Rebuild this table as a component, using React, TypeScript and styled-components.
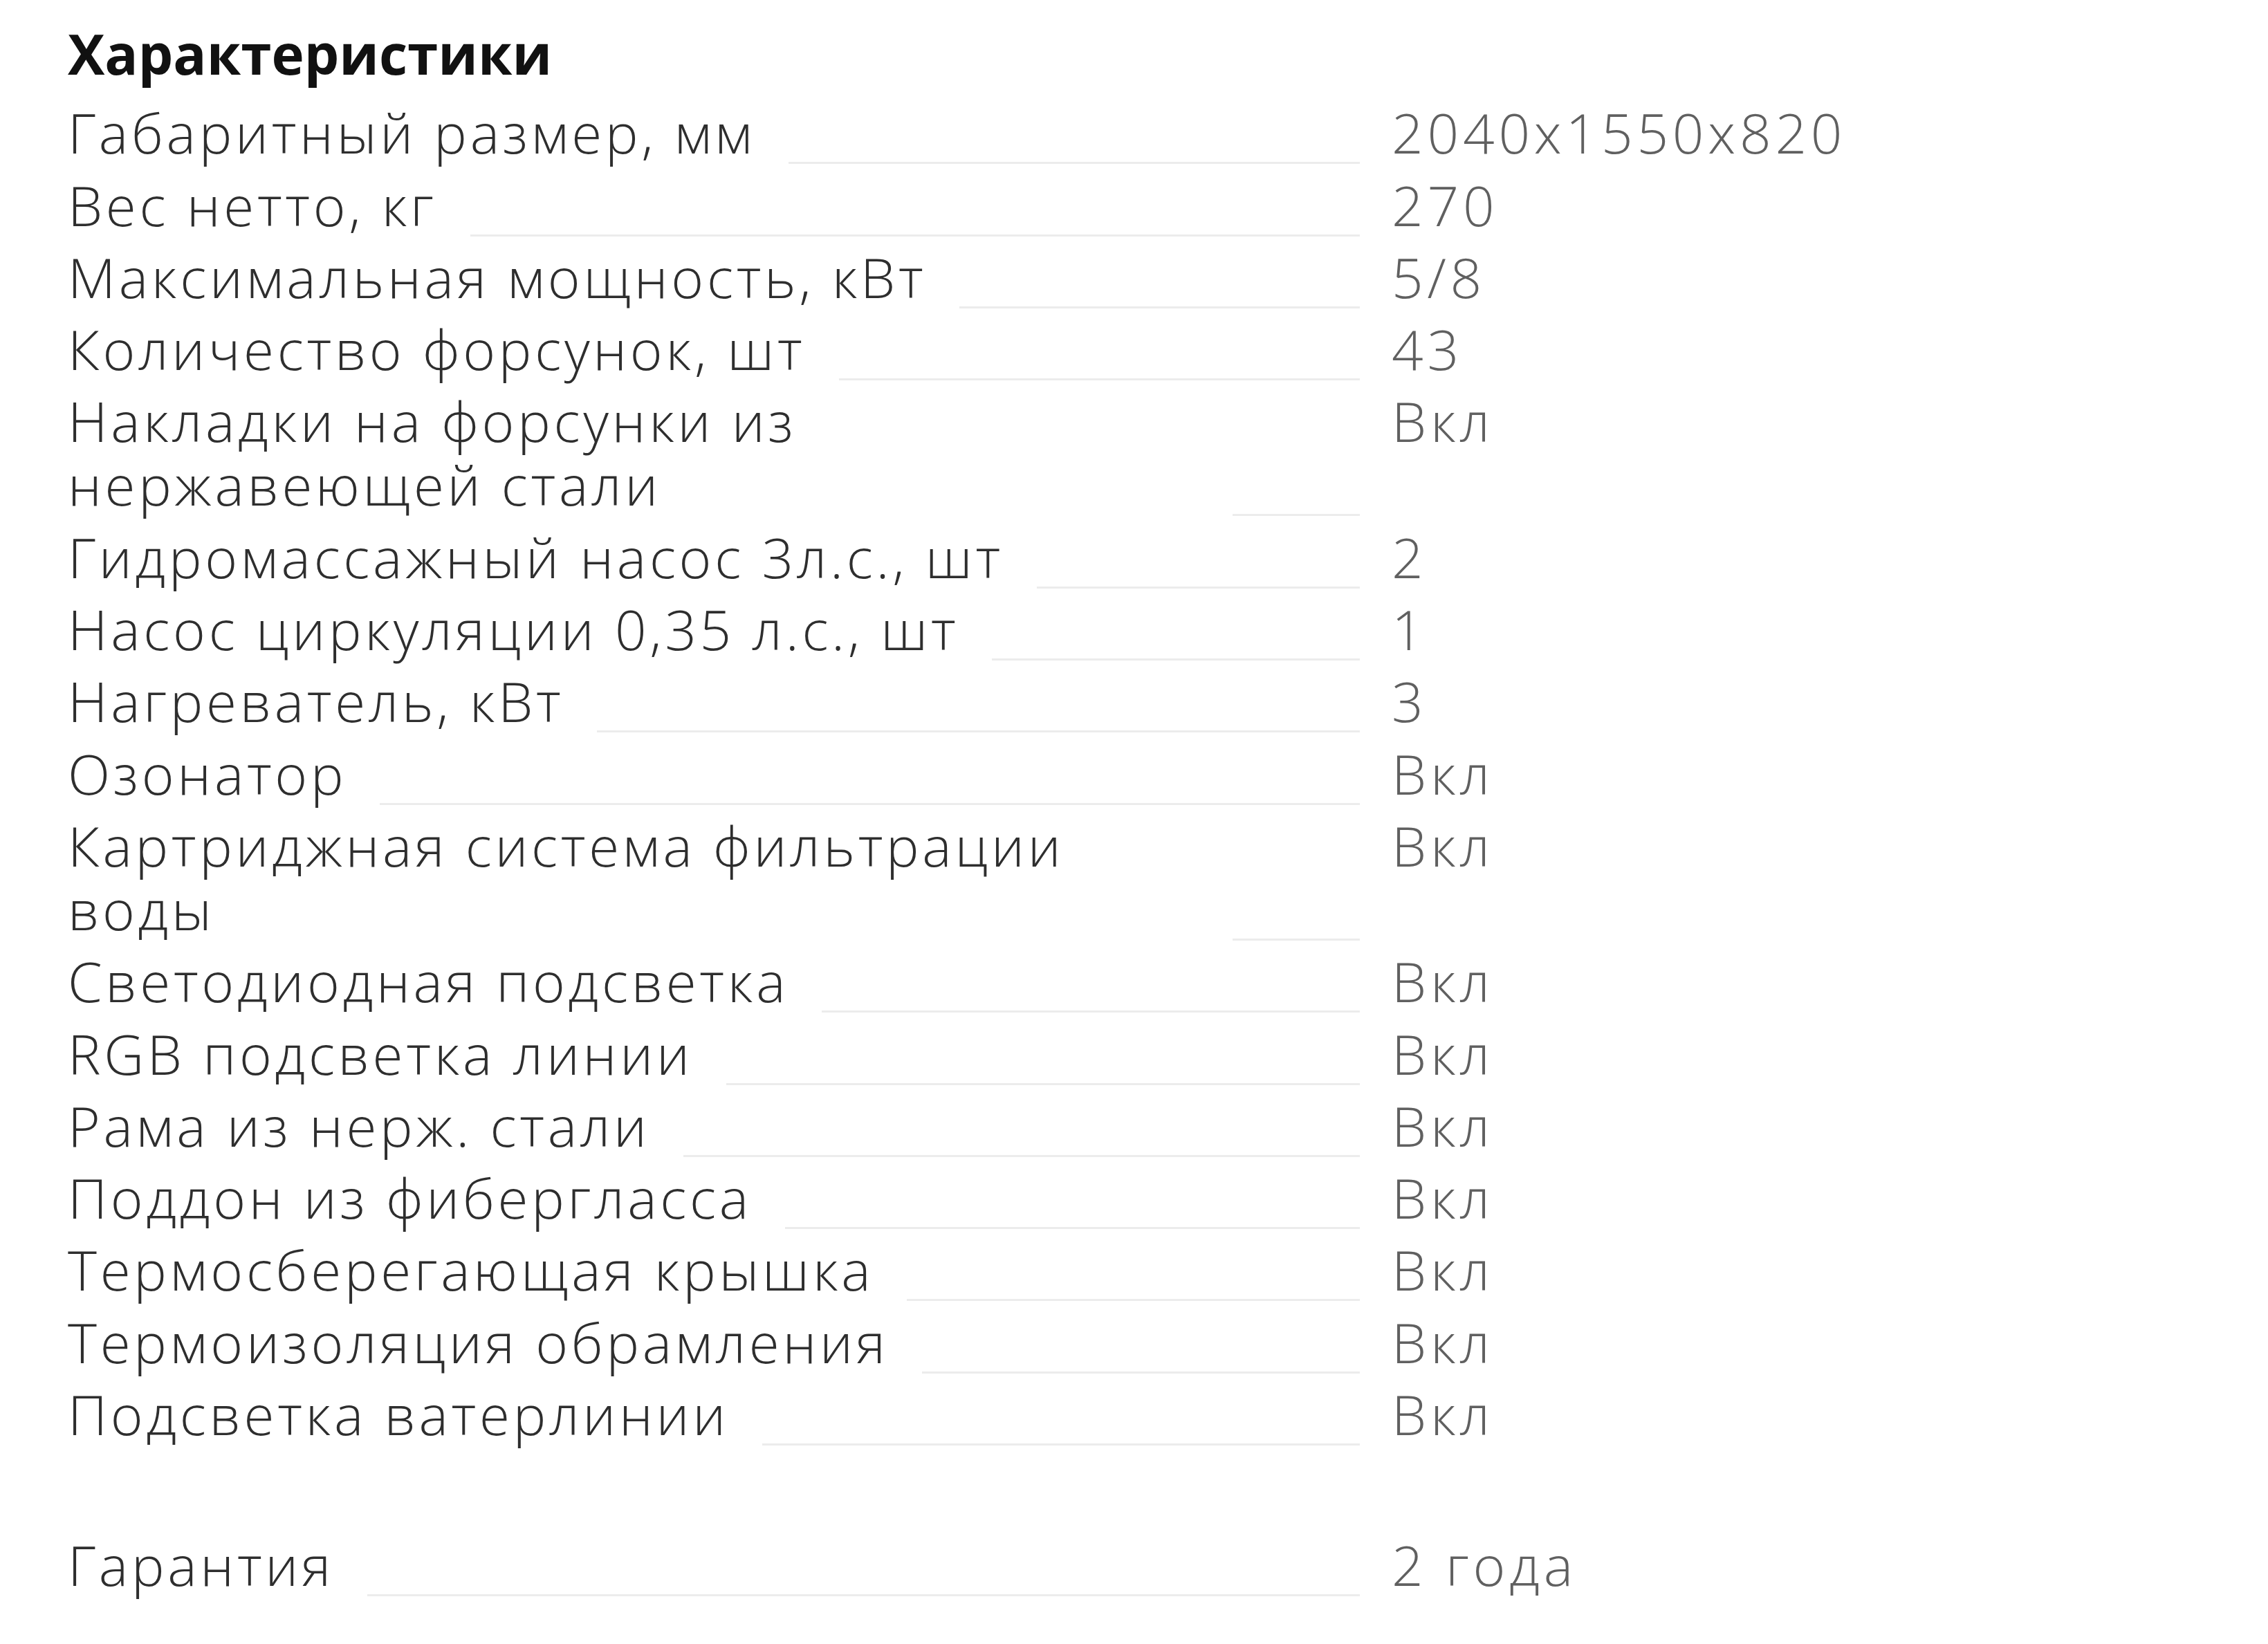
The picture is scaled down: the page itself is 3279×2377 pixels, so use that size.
import styled, { createGlobalStyle } from 'styled-components';

const GlobalStyle = createGlobalStyle`
  html, body {
    margin: 0;
    padding: 0;
    background: #ffffff;
  }
  body {
    font-family: 'Open Sans', 'Liberation Sans', sans-serif;
  }
`;

const Wrapper = styled.section`
  padding: 31px 0 60px 98px;
  display: flex;
  flex-direction: column;
  gap: 12.3px;
`;

const Title = styled.h2`
  margin: 0 0 10px;
  font-size: 80px;
  line-height: 92px;
  font-weight: 700;
  color: #111;
`;

const Row = styled.div<{ $spaced?: boolean }>`
  display: grid;
  grid-template-columns: 1868px 760px;
  column-gap: 46px;
  margin-top: ${(p) => (p.$spaced ? '114px' : '0')};
  font-size: 80px;
  line-height: 92px;
  font-weight: 300;
  letter-spacing: 4.7px;
`;

const LabelCell = styled.div`
  display: flex;
  align-items: flex-end;
  gap: 48px;
`;

const Label = styled.span`
  flex: 0 1 auto;
  color: #2e2e2e;
`;

const Leader = styled.span`
  flex: 1 1 auto;
  min-width: 184px;
  border-bottom: 3px solid #ececec;
`;

const Value = styled.span`
  color: #606060;
  letter-spacing: 5.8px;
`;

const specs: [string, string][] = [
  ['Габаритный размер, мм', '2040x1550x820'],
  ['Вес нетто, кг', '270'],
  ['Максимальная мощность, кВт', '5/8'],
  ['Количество форсунок, шт', '43'],
  ['Накладки на форсунки из нержавеющей стали', 'Вкл'],
  ['Гидромассажный насос 3л.с., шт', '2'],
  ['Насос циркуляции 0,35 л.с., шт', '1'],
  ['Нагреватель, кВт', '3'],
  ['Озонатор', 'Вкл'],
  ['Картриджная система фильтрации воды', 'Вкл'],
  ['Светодиодная подсветка', 'Вкл'],
  ['RGB подсветка линии', 'Вкл'],
  ['Рама из нерж. стали', 'Вкл'],
  ['Поддон из фибергласса', 'Вкл'],
  ['Термосберегающая крышка', 'Вкл'],
  ['Термоизоляция обрамления', 'Вкл'],
  ['Подсветка ватерлинии', 'Вкл'],
];

export default function App() {
  return (
    <>
      <GlobalStyle />
      <Wrapper>
        <Title>Характеристики</Title>
        {specs.map(([label, value]) => (
          <Row key={label}>
            <LabelCell>
              <Label>{label}</Label>
              <Leader />
            </LabelCell>
            <Value>{value}</Value>
          </Row>
        ))}
        <Row $spaced>
          <LabelCell>
            <Label>Гарантия</Label>
            <Leader />
          </LabelCell>
          <Value>2 года</Value>
        </Row>
      </Wrapper>
    </>
  );
}
